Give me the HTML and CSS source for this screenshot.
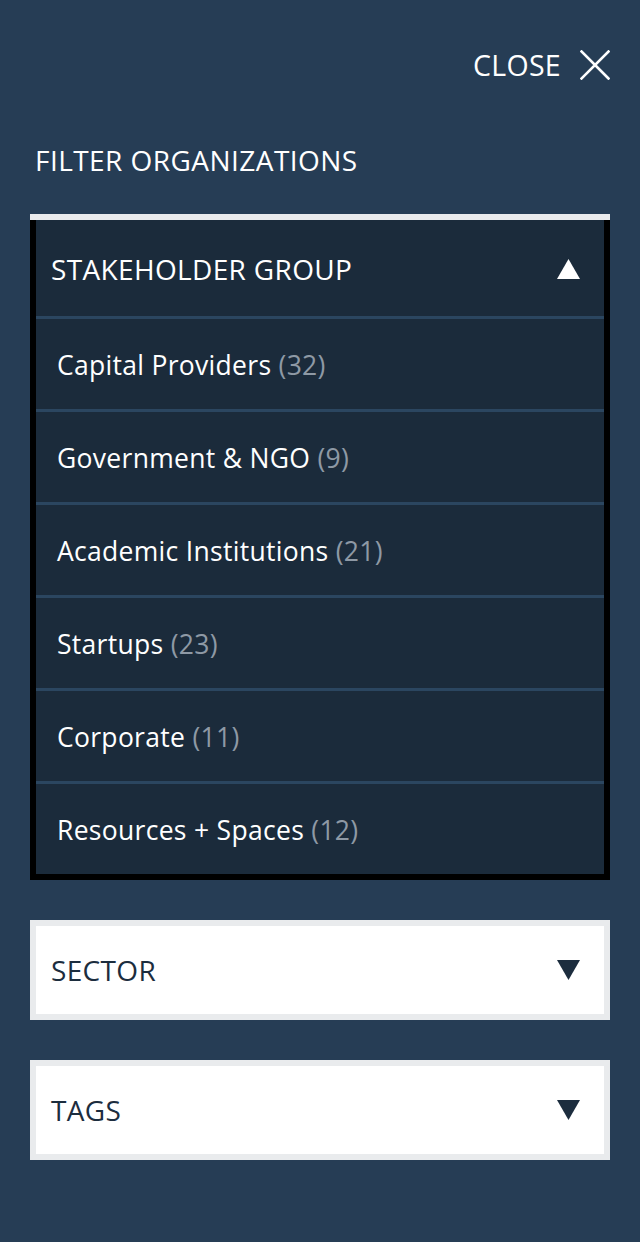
FILE: index.html
```html
<!DOCTYPE html>
<html lang="en">
<head>
<meta charset="utf-8">
<title>Filter Organizations</title>
<link rel="stylesheet" href="styles.css">
</head>
<body>
<div class="panel">
  <div class="close-row">
    <button class="close-btn" type="button">
      <span class="close-label">CLOSE</span>
      <svg class="close-icon" width="30" height="30" viewBox="0 0 30 30" aria-hidden="true">
        <path d="M1.5 1.5 L28.5 28.5 M28.5 1.5 L1.5 28.5" stroke="#ffffff" stroke-width="2.6" fill="none" stroke-linecap="square"/>
      </svg>
    </button>
  </div>
  <h1 class="title">FILTER ORGANIZATIONS</h1>

  <div class="group group-open">
    <div class="group-inner">
      <div class="group-header">
        <span class="group-name">STAKEHOLDER GROUP</span>
        <svg class="caret" width="23" height="20" viewBox="0 0 23 20" aria-hidden="true"><path d="M11.5 0 L23 20 L0 20 Z" fill="#ffffff"/></svg>
      </div>
      <ul class="options">
        <li class="option">Capital Providers <span class="count">(32)</span></li>
        <li class="option">Government &amp; NGO <span class="count">(9)</span></li>
        <li class="option">Academic Institutions <span class="count">(21)</span></li>
        <li class="option">Startups <span class="count">(23)</span></li>
        <li class="option">Corporate <span class="count">(11)</span></li>
        <li class="option">Resources + Spaces <span class="count">(12)</span></li>
      </ul>
    </div>
  </div>

  <div class="group group-closed">
    <span class="group-name">SECTOR</span>
    <svg class="caret" width="23" height="20" viewBox="0 0 23 20" aria-hidden="true"><path d="M0 0 L23 0 L11.5 20 Z" fill="#1c2d3e"/></svg>
  </div>

  <div class="group group-closed">
    <span class="group-name">TAGS</span>
    <svg class="caret" width="23" height="20" viewBox="0 0 23 20" aria-hidden="true"><path d="M0 0 L23 0 L11.5 20 Z" fill="#1c2d3e"/></svg>
  </div>
</div>
</body>
</html>
```

FILE: styles.css
```css
html, body {
  margin: 0;
  padding: 0;
}
body {
  background: #263d55;
  font-family: "Open Sans", "Noto Sans", "Liberation Sans", sans-serif;
  color: #ffffff;
  min-height: 1242px;
}
.panel {
  padding: 0 30px 40px;
}
.close-row {
  height: 132px;
  display: flex;
  justify-content: flex-end;
  align-items: center;
}
.close-btn {
  display: flex;
  align-items: center;
  gap: 19px;
  background: none;
  border: 0;
  padding: 0;
  color: #ffffff;
  font-family: inherit;
  cursor: pointer;
  margin-top: -2px;
}
.close-label {
  font-size: 28.5px;
  line-height: 1;
  letter-spacing: 0.3px;
}
.close-icon {
  display: block;
}
.title {
  margin: 0 0 26px 5px;
  font-size: 28px;
  font-weight: 400;
  line-height: 56px;
  letter-spacing: 0.45px;
}
.group-open {
  border-top: 6px solid #e9ebed;
}
.group-inner {
  background: #1b2b3b;
  border: 6px solid #000000;
  border-top: 0;
}
.group-header {
  height: 96px;
  display: flex;
  align-items: center;
  justify-content: space-between;
  padding: 2px 24px 0 15px;
  box-sizing: border-box;
}
.group-name {
  font-size: 28px;
  letter-spacing: 0.35px;
}
.caret {
  display: block;
}
.options {
  list-style: none;
  margin: 0;
  padding: 0;
}
.option {
  border-top: 3px solid #2b4660;
  height: 90px;
  display: flex;
  align-items: center;
  padding: 2px 0 0 21px;
  box-sizing: content-box;
  height: 88px;
  font-size: 26.5px;
  letter-spacing: 0.3px;
  white-space: pre;
}
.count {
  color: #8e99a5;
}
.group-closed {
  margin-top: 40px;
  height: 88px;
  background: #ffffff;
  border: 6px solid #e9ebed;
  display: flex;
  align-items: center;
  justify-content: space-between;
  padding: 0 24px 0 15px;
  color: #1c2d3e;
}
```
